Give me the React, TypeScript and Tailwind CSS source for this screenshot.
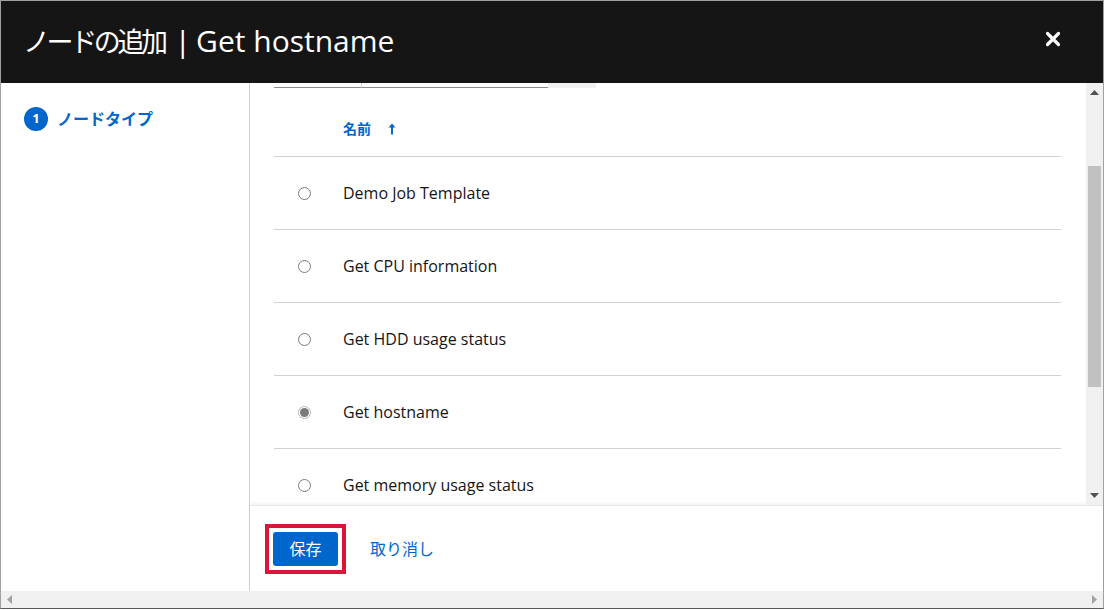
import React from "react";

const rows = [
  { name: "Demo Job Template", selected: false },
  { name: "Get CPU information", selected: false },
  { name: "Get HDD usage status", selected: false },
  { name: "Get hostname", selected: true },
  { name: "Get memory usage status", selected: false },
];

const font = { fontFamily: '"Open Sans", "Noto Sans CJK JP", sans-serif' };

function Radio({ selected }: { selected: boolean }) {
  if (selected) {
    return (
      <span className="flex h-[13px] w-[13px] items-center justify-center rounded-full border border-[#b8b8b8] bg-white">
        <span className="h-[9px] w-[9px] rounded-full bg-[#7a7a7a]" />
      </span>
    );
  }
  return <span className="block h-[13px] w-[13px] rounded-full border border-[#7a7a7a] bg-white" />;
}

export default function App() {
  return (
    <div className="h-[610px] w-[1104px] bg-white" style={font}>
      <div className="flex h-[609px] w-[1104px] flex-col border border-[#a0a0a0] border-b-[#5a5a5a]">
        {/* Header */}
        <div className="flex h-[82px] shrink-0 items-center justify-between bg-[#151515] pl-[22px] pr-[42px]">
          <h1 className="mb-[2px] flex items-baseline leading-none text-white">
            <span className="text-[27px] tracking-[-3.4px]">ノードの追加</span>
            <span className="ml-[10px] text-[30px]">|</span>
            <span className="ml-[5px] text-[30px]">Get hostname</span>
          </h1>
          <svg width="16" height="16" viewBox="0 0 16 16" className="mb-[7px]">
            <path d="M2.5 2.5 L13.5 13.5 M13.5 2.5 L2.5 13.5" stroke="white" strokeWidth="3.2" strokeLinecap="round" />
          </svg>
        </div>

        {/* Body */}
        <div className="flex min-h-0 flex-1">
          {/* Left nav */}
          <div className="w-[249px] shrink-0 border-r border-[#d2d2d2] pl-[23px] pt-[24px]">
            <div className="flex items-center gap-[9px]">
              <span className="flex h-[24px] w-[24px] items-center justify-center rounded-full bg-[#0066cc] text-[13px] font-bold text-white">
                1
              </span>
              <span className="text-[16px] font-semibold text-[#0066cc]">ノードタイプ</span>
            </div>
          </div>

          {/* Main */}
          <div className="flex min-w-0 flex-1 flex-col">
            <div className="flex h-[422px] shrink-0">
              <div className="min-w-0 flex-1 overflow-hidden pl-[24px] pr-[25px]">
                {/* toolbar remnant */}
                <div className="flex h-[5px]">
                  <div className="w-[87px] border-b border-[#8a8d90]" />
                  <div className="w-[187px] border-b border-l border-[#8a8d90] border-l-[#d2d2d2]" />
                  <div className="w-[48px] bg-[#f0f0f0]" />
                </div>
                {/* header row */}
                <div className="flex h-[69px] border-b border-[#d2d2d2] pl-[69px] pt-[32px]">
                  <span className="text-[14px] font-semibold leading-[18px] text-[#0066cc]">名前</span>
                  <svg width="8" height="12" viewBox="0 0 8 12" className="ml-[17px] mt-[3px]">
                    <path d="M4 0.5 L7.5 4.5 L5 4.5 L5 11.5 L3 11.5 L3 4.5 L0.5 4.5 Z" fill="#0066cc" />
                  </svg>
                </div>
                {rows.map((r) => (
                  <div key={r.name} className="flex h-[73px] items-center border-b border-[#d2d2d2]">
                    <div className="flex w-[69px] justify-start pl-[24px]">
                      <Radio selected={r.selected} />
                    </div>
                    <span className="text-[16px] font-medium text-[#151515]">{r.name}</span>
                  </div>
                ))}
              </div>
              {/* vertical scrollbar */}
              <div className="relative flex w-[17px] shrink-0 flex-col items-center bg-[#f0f0f0]">
                <svg width="9" height="5" viewBox="0 0 9 5" className="mt-[7px]">
                  <path d="M4.5 0 L9 5 L0 5 Z" fill="#505050" />
                </svg>
                <div className="mt-[71px] h-[221px] w-[13px] bg-[#c1c1c1]" />
                <div className="flex-1" />
                <svg width="9" height="5" viewBox="0 0 9 5" className="mb-[7px]">
                  <path d="M0 0 L9 0 L4.5 5 Z" fill="#505050" />
                </svg>
              </div>
            </div>
            {/* Footer */}
            <div className="flex flex-1 items-center gap-[24px] border-t border-[#e6e6e6] pl-[15px] shadow-[0_-2px_3px_rgba(0,0,0,0.05)]">
              <div className="border-4 border-[#dc143c] p-[4px]">
                <button className="flex h-[34px] w-[65px] items-center justify-center rounded-[3px] bg-[#0066cc] text-[16px] text-white">
                  保存
                </button>
              </div>
              <span className="text-[16px] text-[#0066cc]">取り消し</span>
            </div>
          </div>
        </div>

        {/* Horizontal scrollbar */}
        <div className="flex h-[17px] shrink-0 items-center justify-between bg-[#f0f0f0] px-[6px]">
          <svg width="5" height="9" viewBox="0 0 5 9">
            <path d="M5 0 L5 9 L0 4.5 Z" fill="#a3a3a3" />
          </svg>
          <svg width="5" height="9" viewBox="0 0 5 9">
            <path d="M0 0 L0 9 L5 4.5 Z" fill="#a3a3a3" />
          </svg>
        </div>
      </div>
    </div>
  );
}
